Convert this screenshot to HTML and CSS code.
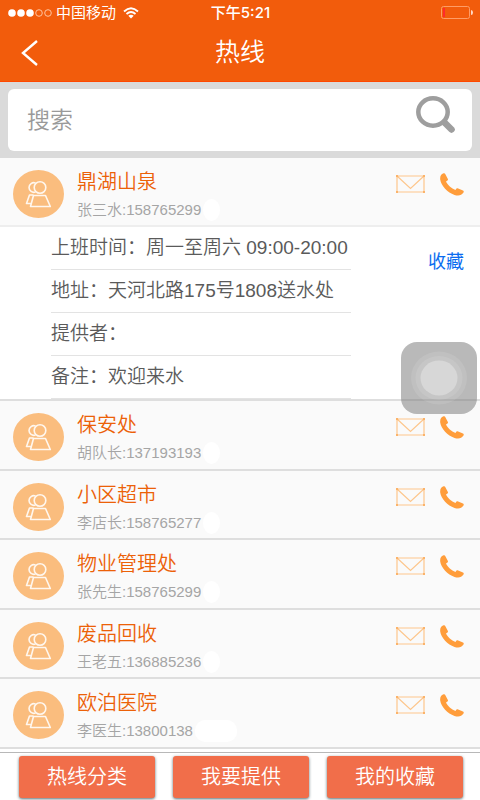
FILE: index.html
```html
<!DOCTYPE html>
<html lang="zh-CN">
<head>
<meta charset="utf-8">
<meta name="viewport" content="width=device-width, initial-scale=1">
<title>热线</title>
<link rel="stylesheet" href="styles.css">
</head>
<body>
<svg class="defs" aria-hidden="true">
  <symbol id="people" viewBox="0 0 51 48">
    <ellipse cx="25.500" cy="24" rx="25.500" ry="24" fill="#fabd7e"/>
    <g fill="none" stroke="#fff7ee" stroke-width="1.600" stroke-linejoin="round">
      <path d="M22.500 13a4.800 4.800 0 1 0 0 9"/>
      <circle cx="27" cy="17.500" r="5.800"/>
      <path d="M20.500 25.500H32.500L37.300 36.500H17.500ZM20.500 25H16.500L13.500 33.500H17.500"/>
    </g>
  </symbol>
  <symbol id="mail" viewBox="0 0 29 18">
    <path d="M1 1h27v16H1zM1 1l13.500 12.500L28 1" fill="none" stroke="#fdc68c" stroke-width="1.200"/>
    <path d="M0 0h2v2H0zM27 0h2v2h-2zM0 16h2v2H0zM27 16h2v2h-2z" fill="#fbb36a"/>
  </symbol>
  <symbol id="phone" viewBox="0 0 24 23">
    <path d="M3.500.3Q5 0 5.500 1.500L8 6.200Q8.300 7.500 6 8.500C7.500 12 11.500 15.300 15.500 17Q16.200 14.800 17.600 15.300L23 17.500Q24.200 18.200 23.500 19.500C21.500 22.500 18.500 23.300 14.500 21.900C7.500 19.500 1.200 13 .2 6.500C-.1 3 1.200 1 3.500.3Z" fill="#ff9d3b"/>
  </symbol>
</svg>

<header class="header">
  <div class="status">
    <div class="carrier">
      <svg width="44" height="12" viewBox="0 0 44 12" aria-hidden="true">
        <g fill="#fff"><circle cx="4" cy="6" r="3.800"/><circle cx="13" cy="6" r="3.800"/><circle cx="22" cy="6" r="3.800"/></g>
        <g fill="none" stroke="#ffc4a0"><circle cx="31" cy="6" r="3.300"/><circle cx="40" cy="6" r="3.300"/></g>
      </svg>
      <span>中国移动</span>
      <svg class="wifi" width="16" height="12" viewBox="0 0 16 12" aria-hidden="true">
        <path d="M1 4.500Q8-2 15 4.500M3.500 7Q8 3 12.500 7" fill="none" stroke="#fff" stroke-width="1.800"/>
        <path d="M5.300 8.800Q8 6.500 10.700 8.800L8 11.500z" fill="#fff"/>
      </svg>
    </div>
    <span class="time">下午5:21</span>
    <svg class="battery" width="32" height="13" viewBox="0 0 32 13" aria-hidden="true">
      <rect x=".5" y=".5" width="28" height="12" rx="2" fill="none" stroke="#ff9c66"/>
      <rect x="2" y="2" width="2" height="9" fill="#ff2b2b"/>
      <path d="M30 4q2 0 2 2.500T30 9z" fill="#ffd9c4"/>
    </svg>
  </div>
  <div class="nav">
    <button class="back" type="button" aria-label="返回">
      <svg width="18" height="26" viewBox="0 0 18 26" aria-hidden="true"><path d="M16 1L2 13l14 12" fill="none" stroke="#fff" stroke-width="2.400"/></svg>
    </button>
    <h1>热线</h1>
  </div>
</header>

<form class="search">
  <div class="search-box">
    <input type="search" placeholder="搜索" aria-label="搜索">
    <button type="button" aria-label="搜索">
      <svg width="40" height="38" viewBox="0 0 40 38" aria-hidden="true">
        <path d="M29 27l6.500 6.500" stroke="#9e9e9e" stroke-width="6.500" stroke-linecap="round"/>
        <ellipse cx="17" cy="16" rx="14.700" ry="13.700" fill="#fff" stroke="#9e9e9e" stroke-width="4.500"/>
      </svg>
    </button>
  </div>
</form>

<main class="hotlines">
  <article class="row row-open">
    <svg class="avatar" aria-hidden="true"><use href="#people"/></svg>
    <div class="who"><h2>鼎湖山泉</h2><p>张三水:158765299<span class="mask"></span></p></div>
    <a href="#" class="mail" aria-label="发信息"><svg width="29" height="18"><use href="#mail"/></svg></a>
    <a href="#" aria-label="拨打电话"><svg width="24" height="23"><use href="#phone"/></svg></a>
  </article>
  <section class="details">
    <ul>
      <li>上班时间：周一至周六 09:00-20:00</li>
      <li>地址：天河北路175号1808送水处</li>
      <li>提供者：</li>
      <li>备注：欢迎来水</li>
    </ul>
    <button class="favourite" type="button">收藏</button>
    <button class="assistive" type="button" aria-label="辅助触控">
      <svg width="58" height="54" viewBox="0 0 58 54" aria-hidden="true">
        <g fill="#fff">
          <ellipse cx="29" cy="27" rx="28" ry="26.500" fill-opacity=".1"/>
          <ellipse cx="29" cy="27" rx="23.500" ry="22" fill-opacity=".1"/>
          <ellipse cx="29" cy="27" rx="18.500" ry="17.500" fill-opacity=".3"/>
        </g>
      </svg>
    </button>
  </section>
  <div class="list">
    <article class="row">
      <svg class="avatar" aria-hidden="true"><use href="#people"/></svg>
      <div class="who"><h2>保安处</h2><p>胡队长:137193193<span class="mask"></span></p></div>
      <a href="#" class="mail" aria-label="发信息"><svg width="29" height="18"><use href="#mail"/></svg></a>
      <a href="#" aria-label="拨打电话"><svg width="24" height="23"><use href="#phone"/></svg></a>
    </article>
    <article class="row">
      <svg class="avatar" aria-hidden="true"><use href="#people"/></svg>
      <div class="who"><h2>小区超市</h2><p>李店长:158765277<span class="mask"></span></p></div>
      <a href="#" class="mail" aria-label="发信息"><svg width="29" height="18"><use href="#mail"/></svg></a>
      <a href="#" aria-label="拨打电话"><svg width="24" height="23"><use href="#phone"/></svg></a>
    </article>
    <article class="row">
      <svg class="avatar" aria-hidden="true"><use href="#people"/></svg>
      <div class="who"><h2>物业管理处</h2><p>张先生:158765299<span class="mask"></span></p></div>
      <a href="#" class="mail" aria-label="发信息"><svg width="29" height="18"><use href="#mail"/></svg></a>
      <a href="#" aria-label="拨打电话"><svg width="24" height="23"><use href="#phone"/></svg></a>
    </article>
    <article class="row">
      <svg class="avatar" aria-hidden="true"><use href="#people"/></svg>
      <div class="who"><h2>废品回收</h2><p>王老五:136885236<span class="mask"></span></p></div>
      <a href="#" class="mail" aria-label="发信息"><svg width="29" height="18"><use href="#mail"/></svg></a>
      <a href="#" aria-label="拨打电话"><svg width="24" height="23"><use href="#phone"/></svg></a>
    </article>
    <article class="row">
      <svg class="avatar" aria-hidden="true"><use href="#people"/></svg>
      <div class="who"><h2>欧泊医院</h2><p>李医生:13800138<span class="mask mask-wide"></span></p></div>
      <a href="#" class="mail" aria-label="发信息"><svg width="29" height="18"><use href="#mail"/></svg></a>
      <a href="#" aria-label="拨打电话"><svg width="24" height="23"><use href="#phone"/></svg></a>
    </article>
  </div>
</main>

<footer class="actions">
  <button type="button">热线分类</button>
  <button type="button">我要提供</button>
  <button type="button">我的收藏</button>
</footer>
</body>
</html>
```

FILE: styles.css
```css
* {
  box-sizing: border-box;
}

body {
  margin: 0;
  min-height: 100vh;
  display: flex;
  flex-direction: column;
  background: #fff;
  font-family: "Liberation Sans", "Noto Sans CJK SC", sans-serif;
  font-weight: 350;
}

h1,
h2,
p,
ul {
  margin: 0;
  padding: 0;
  font-weight: inherit;
}

button,
input {
  font: inherit;
  border: 0;
  padding: 0;
  background: none;
}

svg {
  display: block;
}

.defs {
  position: absolute;
  width: 0;
  height: 0;
}

.header {
  background: #f25c0c;
  border-bottom: 1px solid #ff4800;
  color: #fff;
}

.status {
  display: grid;
  grid-template-columns: 1fr auto 1fr;
  align-items: center;
  height: 25px;
  padding: 0 7px 0 8px;
  font-family: Inter, "Noto Sans CJK SC", sans-serif;
  font-size: 15px;
  font-weight: 400;
  line-height: 24px;
}

.carrier {
  display: flex;
  align-items: center;
  gap: 4px;
}

.wifi {
  margin-left: 3px;
}

.time {
  font-weight: 500;
}

.battery {
  justify-self: end;
}

.nav {
  display: grid;
  grid-template-columns: 60px 1fr 60px;
  align-items: center;
  height: 56px;
}

.back {
  justify-self: center;
}

.nav h1 {
  padding-bottom: 2px;
  font-size: 25px;
  line-height: 36px;
  text-align: center;
}

.search {
  padding: 7px 8px;
  background: #dadada;
}

.search-box {
  display: flex;
  align-items: flex-start;
  height: 62px;
  padding: 7px 16px 0 19px;
  border-radius: 6px;
  background: #fff;
}

.search-box input {
  flex: 1;
  min-width: 0;
  height: 48px;
  outline: 0;
  color: #999;
  font-size: 23px;
}

.search-box input::placeholder {
  color: #999;
}

.hotlines {
  flex: 1;
  display: flex;
  flex-direction: column;
}

.list {
  flex: 1;
  display: flex;
  flex-direction: column;
}

.row {
  display: flex;
  align-items: flex-start;
  padding: 12px 16px 0 13px;
  border-bottom: 2px solid #dedede;
  background: #fafafa;
}

.list .row {
  flex: 1;
}

.row-open {
  height: 69px;
  border-bottom-color: #eee;
}

.avatar {
  width: 51px;
  height: 48px;
}

.who {
  flex: 1;
  margin-left: 13px;
}

.who h2 {
  color: #ec6108;
  font-size: 20px;
  line-height: 24px;
}

.who p {
  display: flex;
  align-items: center;
  margin-top: 4px;
  color: #a5a5a5;
  font-size: 15px;
  line-height: 24px;
}

.mask {
  width: 17px;
  height: 22px;
  margin-left: 2px;
  border-radius: 50%;
  background: #fff;
}

.mask-wide {
  width: 42px;
  border-radius: 10px;
}

.row a {
  margin-top: 3px;
}

.row .mail {
  margin: 5px 15px 0 0;
}

.details {
  position: relative;
  display: flex;
  justify-content: space-between;
  align-items: flex-start;
  padding: 0 16px 0 51px;
  border-bottom: 2px solid #dedede;
}

.details ul {
  width: 300px;
  list-style: none;
}

.details li {
  height: 43px;
  border-bottom: 1px solid #e3e3e3;
  color: #5a5a5a;
  font-size: 19px;
  line-height: 42px;
  white-space: nowrap;
}

.favourite {
  margin-top: 22px;
  color: #0a6cf0;
  font-size: 18px;
  font-weight: 400;
  line-height: 26px;
}

.assistive {
  position: absolute;
  right: 3px;
  bottom: -15px;
  display: grid;
  place-items: center;
  width: 76px;
  height: 72px;
  border-radius: 16px;
  background: rgba(120, 120, 120, 0.52);
}

.actions {
  display: grid;
  grid-template-columns: repeat(3, 1fr);
  gap: 18px;
  margin-top: 3px;
  padding: 3px 17px 2px 19px;
  border-top: 1px solid #b8b8b8;
}

.actions button {
  height: 42px;
  border-radius: 3px;
  background: #f16e4a;
  box-shadow: 0 1px 3px rgba(20, 50, 60, 0.7);
  color: #fff;
  font-size: 20px;
  line-height: 42px;
}
```
